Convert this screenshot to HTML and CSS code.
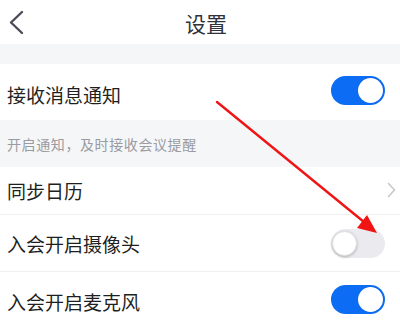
FILE: index.html
```html
<!DOCTYPE html>
<html lang="zh">
<head>
<meta charset="utf-8">
<link rel="stylesheet" href="styles.css">
</head>
<body>
<div class="page">
  <header class="topbar">
    <svg class="back" width="24" height="44" viewBox="0 0 24 44"><path d="M22 12 L11 22.5 L22 33" fill="none" stroke="#4a4d58" stroke-width="2.4" stroke-linecap="round" stroke-linejoin="round"/></svg>
    <div class="title">设置</div>
  </header>
  <div class="band"></div>
  <div class="row row1">
    <span class="label">接收消息通知</span>
    <span class="toggle on"><span class="knob"></span></span>
  </div>
  <div class="hint">开启通知，及时接收会议提醒</div>
  <div class="row row2">
    <span class="label">同步日历</span>
    <svg class="chev" width="9" height="16" viewBox="0 0 9 16"><path d="M1.5 1.5 L7.5 8 L1.5 14.5" fill="none" stroke="#c8c8cc" stroke-width="1.6" stroke-linecap="round" stroke-linejoin="round"/></svg>
  </div>
  <div class="row row3">
    <span class="label">入会开启摄像头</span>
    <span class="toggle off"><span class="knob"></span></span>
  </div>
  <div class="row row4">
    <span class="label">入会开启麦克风</span>
    <span class="toggle on"><span class="knob"></span></span>
  </div>
  <svg class="arrow" width="400" height="325" viewBox="0 0 400 325">
    <line x1="217" y1="102" x2="364" y2="222" stroke="#f01414" stroke-width="2.4" stroke-linecap="round"/>
    <polygon points="377,233 357,228 367,215" fill="#f01414"/>
  </svg>
</div>
</body>
</html>
```
FILE: styles.css
```css
* { box-sizing: border-box; }
html, body { margin: 0; padding: 0; background: #fff; }
body { font-family: "Noto Sans CJK SC", "Noto Sans", sans-serif; }
.page { position: relative; width: 400px; height: 325px; overflow: hidden; background: #fff; }
.topbar { height: 44px; display: flex; align-items: center; justify-content: center; position: relative; }
.back { position: absolute; left: 0; top: 0; }
.title { font-size: 21px; color: #2f313b; line-height: 1; margin-left: 12px; margin-top: 2px; }
.band { height: 20px; background: #f5f6f8; }
.row { display: flex; align-items: center; justify-content: space-between; padding: 0 15px 0 7px; border-bottom: 1px solid #efeff2; }
.row1 { height: 56px; border-bottom: none; padding-top: 3px; }
.row2 { height: 48px; padding-right: 4px; }
.row3 { height: 57px; }
.row4 { height: 60px; border-bottom: none; padding-bottom: 5px; }
.label { font-size: 19px; color: #1f1f22; line-height: 1; }
.row1 .label { margin-top: 2px; }
.row4 .label { margin-top: 4px; }
.hint { height: 47px; background: #f5f6f8; font-size: 14px; letter-spacing: 0.6px; color: #9a9ba0; display: flex; align-items: center; padding-left: 7px; padding-top: 1px; }
.toggle { width: 54px; height: 29px; border-radius: 15px; position: relative; display: block; }
.toggle.on { background: #0c6cf3; }
.toggle.off { background: #ebebef; }
.knob { position: absolute; top: 2px; width: 25px; height: 25px; border-radius: 50%; background: #fff; }
.toggle.on .knob { right: 2px; box-shadow: 0 0 1px rgba(0,0,0,0.2); }
.toggle.off .knob { left: 1px; top: 2px; box-shadow: 0 1px 3px rgba(0,0,0,0.25); border: 1px solid #e0e0e3; }
.row1 .toggle { margin-top: -6px; }
.row3 .toggle { margin-top: 1px; }
.chev { display: block; margin-top: -2px; }
.arrow { position: absolute; left: 0; top: 0; pointer-events: none; }
```
